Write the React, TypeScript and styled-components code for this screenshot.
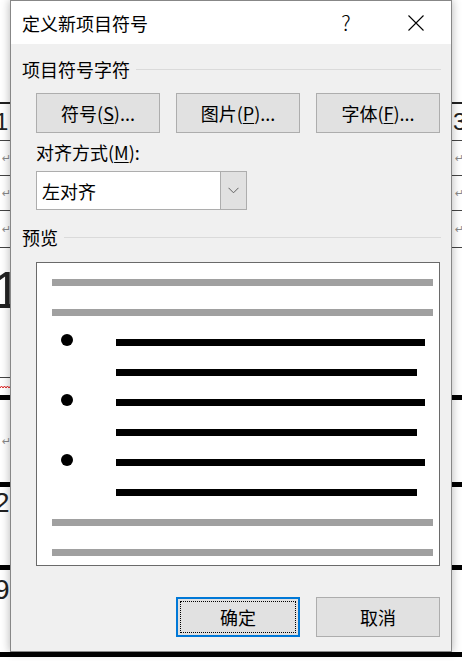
import styled, { createGlobalStyle } from "styled-components";

const GlobalStyle = createGlobalStyle`
  html, body {
    margin: 0;
    padding: 0;
  }
  body {
    width: 462px;
    height: 661px;
    overflow: hidden;
    background: #fff;
    font-family: "Noto Sans CJK SC", "Noto Sans", sans-serif;
  }
`;

/* ---------- document behind the dialog ---------- */

const Page = styled.div`
  position: relative;
  width: 462px;
  height: 661px;
  overflow: hidden;
  background: #fff;
`;

const DocRow = styled.div<{ $h: number; $border?: string }>`
  box-sizing: border-box;
  height: ${(p) => p.$h}px;
  display: flex;
  justify-content: space-between;
  border-bottom: ${(p) => p.$border ?? "none"};
`;

const Mark = styled.div<{ $side: "left" | "right"; $border?: string }>`
  box-sizing: border-box;
  width: 10px;
  height: 100%;
  display: flex;
  align-items: center;
  padding-left: ${(p) => (p.$side === "right" ? "1px" : "0")};
  border-bottom: ${(p) => p.$border ?? "none"};
  font-family: "Liberation Sans", sans-serif;
  color: #222;
  overflow: visible;
  white-space: nowrap;
`;

const Digit = styled.span<{ $size: number; $top?: number; $shift?: number }>`
  font-size: ${(p) => p.$size}px;
  line-height: ${(p) => p.$size}px;
  align-self: ${(p) => (p.$top !== undefined ? "flex-start" : "center")};
  margin-top: ${(p) => p.$top ?? 0}px;
  margin-left: ${(p) => p.$shift ?? 0}px;
`;

const Return = styled.span`
  font-family: "DejaVu Sans", sans-serif;
  font-size: 11px;
  color: #8a8a8a;
  margin-left: 2px;
`;

const Squiggle = () => (
  <svg width="10" height="4" viewBox="0 0 10 4" style={{ marginTop: 0 }}>
    <path
      d="M0 3 L1.5 1 L3 3 L4.5 1 L6 3 L7.5 1 L9 3 L10.5 1"
      fill="none"
      stroke="#e02020"
      strokeWidth="1"
    />
  </svg>
);

const Document = () => (
  <div>
    <DocRow $h={104} $border="2px solid #222">
      <Mark $side="left" />
      <Mark $side="right" />
    </DocRow>
    <DocRow $h={37} $border="1px solid #444">
      <Mark $side="left">
        <Digit $size={24} $shift={-5}>1</Digit>
      </Mark>
      <Mark $side="right">
        <Digit $size={24}>3</Digit>
      </Mark>
    </DocRow>
    {[35, 35, 37].map((h, i) => (
      <DocRow key={i} $h={h} $border="1px solid #444">
        <Mark $side="left">
          <Return>↵</Return>
        </Mark>
        <Mark $side="right">
          <Return>↵</Return>
        </Mark>
      </DocRow>
    ))}
    <DocRow $h={130}>
      <Mark $side="left" $border="1px solid #444">
        <Digit $size={52} $top={16} $shift={-8}>
          1
        </Digit>
      </Mark>
      <Mark $side="right" />
    </DocRow>
    <DocRow $h={22} $border="5px solid #000">
      <Mark $side="left">
        <Squiggle />
      </Mark>
      <Mark $side="right" />
    </DocRow>
    <DocRow $h={87} $border="5px solid #000">
      <Mark $side="left">
        <Digit $size={1} $top={15} />
        <Return>↵</Return>
      </Mark>
      <Mark $side="right" />
    </DocRow>
    <DocRow $h={83} $border="5px solid #000">
      <Mark $side="left">
        <Digit $size={28} $top={2} $shift={-6}>
          2
        </Digit>
      </Mark>
      <Mark $side="right" />
    </DocRow>
    <DocRow $h={87} $border="5px solid #000">
      <Mark $side="left">
        <Digit $size={28} $top={6} $shift={-6}>
          9
        </Digit>
      </Mark>
      <Mark $side="right" />
    </DocRow>
  </div>
);

/* ---------- dialog ---------- */

const Dialog = styled.div`
  position: absolute;
  top: 0;
  left: 10px;
  width: 442px;
  height: 652px;
  box-sizing: border-box;
  border: 1px solid #878787;
  background: #f0f0f0;
  display: flex;
  flex-direction: column;
  box-shadow: 0 0 9px rgba(0, 0, 0, 0.3);
  font-family: "Noto Sans CJK SC", sans-serif;
  font-size: 18px;
  color: #000;
`;

const TitleBar = styled.div`
  height: 43px;
  flex-shrink: 0;
  background: #fff;
  display: flex;
  align-items: center;
`;

const Title = styled.div`
  flex: 1;
  padding-left: 11px;
  line-height: 1;
`;

const CaptionButton = styled.div`
  width: 70px;
  height: 100%;
  display: flex;
  align-items: center;
  justify-content: center;
  font-size: 21px;
  font-weight: 300;
  line-height: 1;
`;

const Body = styled.div`
  flex: 1;
  display: flex;
  flex-direction: column;
  padding: 0 10px 14px 11px;
`;

const SectionHeader = styled.div<{ $top: number }>`
  display: flex;
  align-items: center;
  gap: 6px;
  height: 22px;
  line-height: 22px;
  margin-top: ${(p) => p.$top}px;
`;

const HeaderRule = styled.div`
  flex: 1;
  height: 1px;
  background: #dadada;
`;

const Indented = styled.div`
  margin-left: 14px;
  margin-right: 1px;
  display: flex;
  flex-direction: column;
`;

const ButtonRow = styled.div<{ $top: number; $end?: boolean }>`
  display: flex;
  gap: 16px;
  margin-top: ${(p) => p.$top}px;
  justify-content: ${(p) => (p.$end ? "flex-end" : "flex-start")};
`;

const PushButton = styled.div<{ $focused?: boolean }>`
  width: 124px;
  height: 40px;
  box-sizing: border-box;
  background: #e1e1e1;
  border: ${(p) => (p.$focused ? "2px solid #0078d7" : "1px solid #adadad")};
  outline: ${(p) => (p.$focused ? "1px dotted #000" : "none")};
  outline-offset: -5px;
  display: flex;
  align-items: center;
  justify-content: center;
  line-height: 1;
`;

const Key = styled.span`
  text-decoration: underline;
  text-underline-offset: 2px;
  text-decoration-thickness: 1px;
`;

const Label = styled.div`
  margin-top: 9px;
  height: 20px;
  line-height: 20px;
`;

const Combo = styled.div`
  margin-top: 9px;
  width: 211px;
  height: 39px;
  box-sizing: border-box;
  border: 1px solid #adadad;
  background: #fff;
  display: flex;
`;

const ComboText = styled.div`
  flex: 1;
  padding-left: 5px;
  display: flex;
  align-items: center;
  line-height: 1;
`;

const ComboButton = styled.div`
  width: 25px;
  background: #e1e1e1;
  border-left: 1px solid #adadad;
  display: flex;
  align-items: center;
  justify-content: center;
`;

const PreviewBox = styled.div`
  margin-top: 14px;
  width: 404px;
  height: 304px;
  box-sizing: border-box;
  border: 1px solid #6a6a6a;
  background: #fff;
  padding-top: 16px;
  display: flex;
  flex-direction: column;
  gap: 23px;
`;

const PreviewRow = styled.div`
  height: 7px;
  display: flex;
  align-items: center;
`;

const Bar = styled.div<{ $left: number; $width: number; $dark?: boolean }>`
  height: 7px;
  margin-left: ${(p) => p.$left}px;
  width: ${(p) => p.$width}px;
  background: ${(p) => (p.$dark ? "#000" : "#a0a0a0")};
  flex-shrink: 0;
`;

const Bullet = styled.div`
  width: 12px;
  height: 12px;
  border-radius: 50%;
  background: #000;
  margin-left: 24px;
  margin-bottom: 6px;
  flex-shrink: 0;
`;

const Chevron = () => (
  <svg width="11" height="7" viewBox="0 0 11 7">
    <polyline points="0.5,0.8 5.5,5.8 10.5,0.8" fill="none" stroke="#606060" strokeWidth="1" />
  </svg>
);

const CloseIcon = () => (
  <svg width="16" height="16" viewBox="0 0 16 16">
    <path d="M0.5 0.5 L15.5 15.5 M15.5 0.5 L0.5 15.5" stroke="#000" strokeWidth="1.1" />
  </svg>
);

const GrayLine = () => (
  <PreviewRow>
    <Bar $left={15} $width={381} />
  </PreviewRow>
);

const BulletItem = () => (
  <>
    <PreviewRow>
      <Bullet />
      <Bar $left={43} $width={309} $dark />
    </PreviewRow>
    <PreviewRow>
      <Bar $left={79} $width={301} $dark />
    </PreviewRow>
  </>
);

export default function App() {
  return (
    <Page>
      <GlobalStyle />
      <Document />
      <Dialog>
        <TitleBar>
          <Title>定义新项目符号</Title>
          <CaptionButton>?</CaptionButton>
          <CaptionButton>
            <CloseIcon />
          </CaptionButton>
        </TitleBar>
        <Body>
          <SectionHeader $top={14}>
            项目符号字符
            <HeaderRule />
          </SectionHeader>
          <Indented>
            <ButtonRow $top={13}>
              <PushButton>
                符号(<Key>S</Key>)...
              </PushButton>
              <PushButton>
                图片(<Key>P</Key>)...
              </PushButton>
              <PushButton>
                字体(<Key>F</Key>)...
              </PushButton>
            </ButtonRow>
            <Label>
              对齐方式(<Key>M</Key>):
            </Label>
            <Combo>
              <ComboText>左对齐</ComboText>
              <ComboButton>
                <Chevron />
              </ComboButton>
            </Combo>
          </Indented>
          <SectionHeader $top={16}>
            预览
            <HeaderRule />
          </SectionHeader>
          <Indented>
            <PreviewBox>
              <GrayLine />
              <GrayLine />
              <BulletItem />
              <BulletItem />
              <BulletItem />
              <GrayLine />
              <GrayLine />
            </PreviewBox>
            <ButtonRow $top={31} $end>
              <PushButton $focused>确定</PushButton>
              <PushButton>取消</PushButton>
            </ButtonRow>
          </Indented>
        </Body>
      </Dialog>
    </Page>
  );
}
